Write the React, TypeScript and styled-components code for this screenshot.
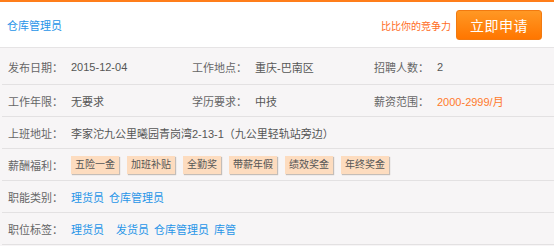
import React from "react";
import styled, { createGlobalStyle } from "styled-components";

const GlobalStyle = createGlobalStyle`
  html, body {
    margin: 0;
    padding: 0;
    background: #fff;
    font-family: "Liberation Sans", "Noto Sans CJK SC", sans-serif;
  }
`;

const Page = styled.div`
  width: 554px;
  height: 246px;
  overflow: hidden;
  border-top: 2px solid #ff7e1a;
  box-sizing: border-box;
`;

const Header = styled.div`
  height: 45px;
  display: flex;
  align-items: center;
  justify-content: space-between;
  padding: 0 12px 0 7px;
`;

const Title = styled.a`
  font-size: 11px;
  color: #2795e8;
  text-decoration: none;
  margin-top: 1px;
`;

const Apply = styled.div`
  display: flex;
  align-items: flex-end;
  gap: 5px;
`;

const Compete = styled.span`
  font-size: 10px;
  color: #ff6c1e;
  margin-bottom: 7px;
`;

const ApplyButton = styled.button`
  width: 86px;
  height: 30px;
  border: 1px solid #f27a10;
  border-radius: 3px;
  background: linear-gradient(#ff9824, #ff7600);
  color: #fff;
  font-family: inherit;
  font-size: 14px;
  letter-spacing: 0.5px;
  padding: 0;
  cursor: pointer;
`;

const Info = styled.div`
  background: #f7f5f6;
  border-top: 1px solid #e6e4e5;
  height: 200px;
`;

const Row = styled.div<{ $first?: boolean }>`
  margin-left: 2px;
  height: ${(p) => (p.$first ? 34 : 31)}px;
  border-bottom: 1px solid #e3e1e2;
  display: flex;
  align-items: center;
  padding-left: 6px;
  padding-top: ${(p) => (p.$first ? 2 : 0)}px;
  box-sizing: content-box;
  font-size: 11px;
  color: #555;
`;

const Cell = styled.div<{ $width?: number }>`
  display: flex;
  align-items: center;
  width: ${(p) => (p.$width ? `${p.$width}px` : "auto")};
`;

const Label = styled.span`
  width: 63px;
  flex-shrink: 0;
  color: #666;
`;

const Value = styled.span<{ $accent?: boolean }>`
  color: ${(p) => (p.$accent ? "#ff7a2c" : "#555")};
`;

const Tags = styled.div`
  display: flex;
  gap: 8px;
`;

const Tag = styled.span`
  height: 18px;
  line-height: 18px;
  padding: 0 4px;
  font-size: 10px;
  color: #555;
  background: #fddcbf;
  box-shadow: 1px 1px 1px #c4bdb8;
`;

const Link = styled.a<{ $space?: number }>`
  color: #2795e8;
  text-decoration: none;
  margin-right: ${(p) => p.$space ?? 5}px;
`;

type Field = { label: string; value: string; accent?: boolean };

const grid: Field[][] = [
  [
    { label: "发布日期：", value: "2015-12-04" },
    { label: "工作地点：", value: "重庆-巴南区" },
    { label: "招聘人数：", value: "2" },
  ],
  [
    { label: "工作年限：", value: "无要求" },
    { label: "学历要求：", value: "中技" },
    { label: "薪资范围：", value: "2000-2999/月", accent: true },
  ],
];

const widths = [184, 182, 0];

const welfare = ["五险一金", "加班补贴", "全勤奖", "带薪年假", "绩效奖金", "年终奖金"];

export default function App() {
  return (
    <>
      <GlobalStyle />
      <Page>
        <Header>
          <Title href="#">仓库管理员</Title>
          <Apply>
            <Compete>比比你的竞争力</Compete>
            <ApplyButton>立即申请</ApplyButton>
          </Apply>
        </Header>
        <Info>
          {grid.map((row, i) => (
            <Row key={i} $first={i === 0}>
              {row.map((f, j) => (
                <Cell key={f.label} $width={widths[j] || undefined}>
                  <Label>{f.label}</Label>
                  <Value $accent={f.accent}>{f.value}</Value>
                </Cell>
              ))}
            </Row>
          ))}
          <Row>
            <Label>上班地址：</Label>
            <Value>李家沱九公里曦园青岗湾2-13-1（九公里轻轨站旁边）</Value>
          </Row>
          <Row>
            <Label>薪酬福利：</Label>
            <Tags>
              {welfare.map((w) => (
                <Tag key={w}>{w}</Tag>
              ))}
            </Tags>
          </Row>
          <Row>
            <Label>职能类别：</Label>
            <Link href="#">理货员</Link>
            <Link href="#">仓库管理员</Link>
          </Row>
          <Row>
            <Label>职位标签：</Label>
            <Link href="#" $space={12}>理货员</Link>
            <Link href="#">发货员</Link>
            <Link href="#">仓库管理员</Link>
            <Link href="#">库管</Link>
          </Row>
        </Info>
      </Page>
    </>
  );
}
